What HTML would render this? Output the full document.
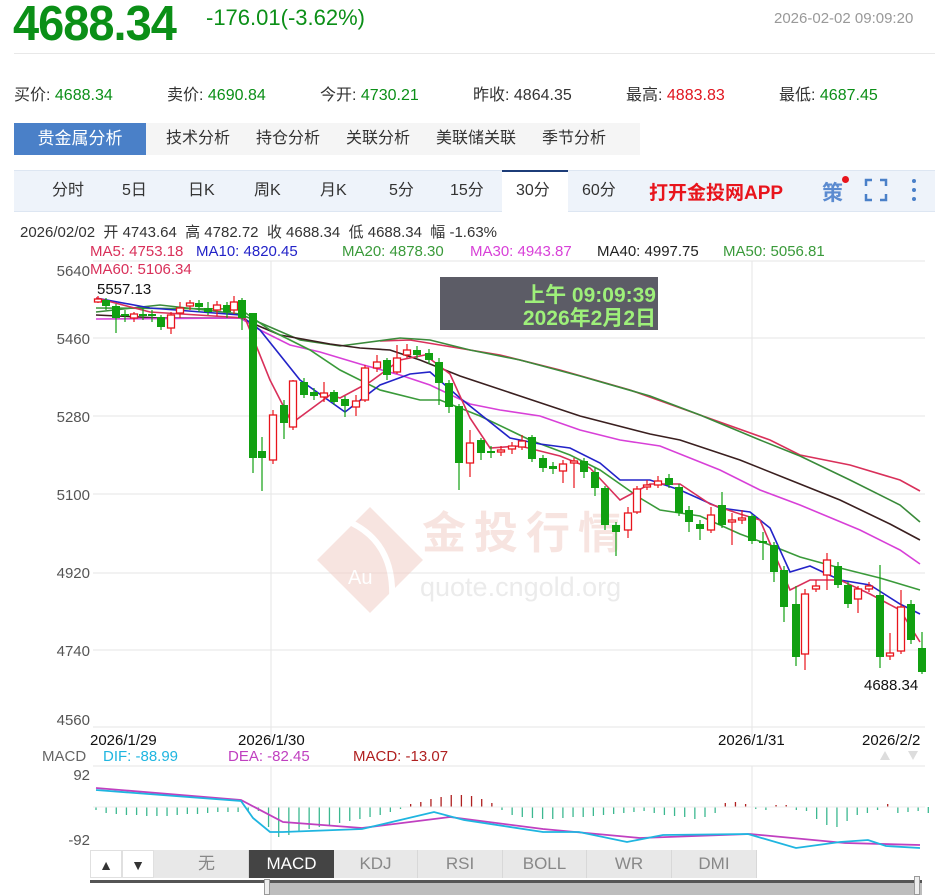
<!DOCTYPE html>
<html><head><meta charset="utf-8"><style>
*{margin:0;padding:0;box-sizing:border-box}
body{width:945px;height:895px;overflow:hidden;background:#fff;font-family:"Liberation Sans","Noto Sans CJK SC",sans-serif;position:relative;color:#333}
.a{position:absolute;white-space:nowrap}
.g{color:#0b8f17}.r{color:#e0141e}
</style></head><body>
<div class="a g" style="left:13px;top:-6px;font-size:47px;font-weight:bold;letter-spacing:-1px;transform:scaleY(1.05);transform-origin:top left">4688.34</div>
<div class="a g" style="left:206px;top:5px;font-size:22px">-176.01(-3.62%)</div>
<div class="a" style="left:774px;top:10px;font-size:15px;color:#999">2026-02-02 09:09:20</div>
<div class="a" style="left:14px;top:53px;width:921px;height:1px;background:#e8e8e8"></div>
<div class="a" style="left:14px;top:81px;font-size:16px">买价: <span class="g">4688.34</span></div>
<div class="a" style="left:167px;top:81px;font-size:16px">卖价: <span class="g">4690.84</span></div>
<div class="a" style="left:320px;top:81px;font-size:16px">今开: <span class="g">4730.21</span></div>
<div class="a" style="left:473px;top:81px;font-size:16px">昨收: <span>4864.35</span></div>
<div class="a" style="left:626px;top:81px;font-size:16px">最高: <span class="r">4883.83</span></div>
<div class="a" style="left:779px;top:81px;font-size:16px">最低: <span class="g">4687.45</span></div>

<div class="a" style="left:14px;top:123px;width:626px;height:32px;background:#f5f5f5"></div>
<div class="a" style="left:14px;top:123px;width:132px;height:32px;background:#4a80c8;color:#fff;font-size:17px;line-height:32px;text-align:center">贵金属分析</div>
<div class="a" style="left:166px;top:123px;font-size:16px;line-height:32px;word-spacing:0">技术分析</div>
<div class="a" style="left:256px;top:123px;font-size:16px;line-height:32px">持仓分析</div>
<div class="a" style="left:346px;top:123px;font-size:16px;line-height:32px">关联分析</div>
<div class="a" style="left:436px;top:123px;font-size:16px;line-height:32px">美联储关联</div>
<div class="a" style="left:542px;top:123px;font-size:16px;line-height:32px">季节分析</div>

<div class="a" style="left:14px;top:170px;width:921px;height:42px;background:#eef3fa;border-top:1px solid #dde6f2;border-bottom:1px solid #dde6f2"></div>
<div class="a" style="left:502px;top:170px;width:66px;height:42px;background:#fff;border-top:2px solid #1c3c78"></div>
<div class="a" style="top:180px;left:0;font-size:16px;line-height:22px">
<span class="a" style="left:52px">分时</span><span class="a" style="left:122px">5日</span><span class="a" style="left:188px">日K</span><span class="a" style="left:254px">周K</span><span class="a" style="left:320px">月K</span><span class="a" style="left:389px">5分</span><span class="a" style="left:450px">15分</span><span class="a" style="left:516px">30分</span><span class="a" style="left:582px">60分</span>
</div>
<div class="a r" style="left:649px;top:178px;font-size:19px;font-weight:bold;color:#e8141c">打开金投网APP</div>
<div class="a" style="left:822px;top:177px;font-size:21px;color:#5b8bd0;font-weight:bold">策</div>
<div class="a" style="left:842px;top:176px;width:7px;height:7px;border-radius:50%;background:#e8141c"></div>
<svg class="a" style="left:864px;top:178px" width="24" height="24"><path d="M2 8V2h6M16 2h6v6M22 16v6h-6M8 22H2v-6" stroke="#4a80c8" stroke-width="2.5" fill="none"/></svg>
<svg class="a" style="left:910px;top:178px" width="8" height="24"><circle cx="4" cy="3" r="2" fill="#4a80c8"/><circle cx="4" cy="12" r="2" fill="#4a80c8"/><circle cx="4" cy="21" r="2" fill="#4a80c8"/></svg>

<div class="a" style="left:20px;top:221px;font-size:15px">2026/02/02 &nbsp;开 4743.64 &nbsp;高 4782.72 &nbsp;收 4688.34 &nbsp;低 4688.34 &nbsp;幅 -1.63%</div>
<div class="a" style="left:90px;top:243px;font-size:15px"><span style="color:#d9305a">MA5: 4753.18</span></div>
<div class="a" style="left:196px;top:243px;font-size:15px;color:#2323c8">MA10: 4820.45</div>
<div class="a" style="left:342px;top:243px;font-size:15px;color:#3a9a3a">MA20: 4878.30</div>
<div class="a" style="left:470px;top:243px;font-size:15px;color:#d840d8">MA30: 4943.87</div>
<div class="a" style="left:597px;top:243px;font-size:15px;color:#222">MA40: 4997.75</div>
<div class="a" style="left:723px;top:243px;font-size:15px;color:#3a9a3a">MA50: 5056.81</div>

<svg class="a" style="left:0;top:0" width="945" height="895" id="s">
<g stroke="#e6e6e6" stroke-width="1">
<line x1="93" y1="261" x2="925" y2="261"/><line x1="93" y1="338" x2="925" y2="338"/><line x1="93" y1="416" x2="925" y2="416"/><line x1="93" y1="494" x2="925" y2="494"/><line x1="93" y1="573" x2="925" y2="573"/><line x1="93" y1="650" x2="925" y2="650"/><line x1="93" y1="727" x2="925" y2="727"/>
<line x1="271" y1="261" x2="271" y2="740"/><line x1="752" y1="261" x2="752" y2="740"/>
<line x1="93" y1="766" x2="925" y2="766"/><line x1="271" y1="766" x2="271" y2="850"/><line x1="752" y1="766" x2="752" y2="850"/>
</g>
<g font-size="15" fill="#555" text-anchor="end">
<text x="90" y="276">5640</text><text x="90" y="344">5460</text><text x="90" y="422">5280</text><text x="90" y="500">5100</text><text x="90" y="578">4920</text><text x="90" y="656">4740</text><text x="90" y="725">4560</text>
<text x="90" y="780">92</text><text x="90" y="845">-92</text>
</g>
<text x="90" y="274" font-size="15" fill="#d9305a">MA60: 5106.34</text>
<text x="97" y="294" font-size="15" fill="#111">5557.13</text>
<text x="864" y="690" font-size="15" fill="#111">4688.34</text>
<g opacity="0.55">
<path d="M370 507L423 560L370 613L317 560Z" fill="#f2cfc8"/>
<path d="M345 520Q395 540 392 600" stroke="#fff" stroke-width="6" fill="none"/>
<text x="348" y="584" font-size="20" fill="#fff">Au</text>
<text x="422" y="548" font-size="44" fill="#f2cfc8" font-weight="bold" letter-spacing="8">金投行情</text>
<text x="420" y="596" font-size="27" fill="#dcdcdc">quote.cngold.org</text>
</g>
<rect x="440" y="277" width="218" height="53" fill="#5c5c66"/>
<text x="656" y="302" font-size="21" fill="#9ef07a" text-anchor="end" font-weight="bold">上午 09:09:39</text>
<text x="656" y="325" font-size="21" fill="#9ef07a" text-anchor="end" font-weight="bold">2026年2月2日</text>
<g id="ma" fill="none" stroke-width="1.6"></g>
<g id="cd"></g>
<g font-size="15" fill="#111">
<text x="90" y="745">2026/1/29</text><text x="238" y="745">2026/1/30</text><text x="718" y="745">2026/1/31</text><text x="862" y="745">2026/2/2</text>
</g>
<text x="42" y="761" font-size="15" fill="#666">MACD</text>
<text x="103" y="761" font-size="15" fill="#1fb5e0">DIF: -88.99</text>
<text x="228" y="761" font-size="15" fill="#c040c0">DEA: -82.45</text>
<text x="353" y="761" font-size="15" fill="#b02020">MACD: -13.07</text>
<path d="M880 760l5-9 5 9z" fill="#ddd"/><path d="M908 751l5 9 5-9z" fill="#ddd"/>
<g id="mb"></g>
<polyline fill="none" stroke="#c040c0" stroke-width="1.8" points="96,788 241,800 283,822 362,828 450,817 543,829 640,838 750,834 845,843 920,845"/>
<polyline fill="none" stroke="#1fb5e0" stroke-width="1.8" points="96,790 241,801 253,818 270,832 283,832 362,829 434,812 464,820 543,832 579,832 627,842 663,835 748,834 796,848 840,842 868,840 886,846 920,848"/>
</svg>

<div class="a" style="left:90px;top:850px;width:667px;height:28px;background:#e8e8e8"></div>
<div class="a" style="left:90px;top:850px;width:32px;height:28px;background:#fff;border:1px solid #e0e0e0;text-align:center;line-height:28px;font-size:14px">▲</div>
<div class="a" style="left:122px;top:850px;width:32px;height:28px;background:#fff;border:1px solid #e0e0e0;text-align:center;line-height:28px;font-size:14px">▼</div>
<div class="a" style="top:850px;left:0;font-size:17px;line-height:28px;color:#888">
<span class="a" style="left:165px;width:84px;text-align:center;border-right:1px solid #d8d8d8">无</span>
<span class="a" style="left:249px;width:85px;text-align:center;background:#444;color:#fff">MACD</span>
<span class="a" style="left:334px;width:84px;text-align:center;border-right:1px solid #d8d8d8">KDJ</span>
<span class="a" style="left:418px;width:85px;text-align:center;border-right:1px solid #d8d8d8">RSI</span>
<span class="a" style="left:503px;width:84px;text-align:center;border-right:1px solid #d8d8d8">BOLL</span>
<span class="a" style="left:587px;width:85px;text-align:center;border-right:1px solid #d8d8d8">WR</span>
<span class="a" style="left:672px;width:85px;text-align:center;border-right:1px solid #d8d8d8">DMI</span>
</div>
<div class="a" style="left:90px;top:880px;width:832px;height:15px;background:#bdbdbd;border-top:3px solid #555"></div>
<div class="a" style="left:90px;top:883px;width:176px;height:12px;background:#fff"></div>
<div class="a" style="left:264px;top:879px;width:6px;height:16px;background:#eee;border:1px solid #999"></div>
<div class="a" style="left:914px;top:876px;width:6px;height:19px;background:#eee;border:1px solid #999"></div>

<script>
var NS="http://www.w3.org/2000/svg";
function el(p,t,a){var e=document.createElementNS(NS,t);for(var k in a)e.setAttribute(k,a[k]);p.appendChild(e);return e;}
var ma=document.getElementById('ma');
var L=[
["#d9305a","380,341 410,340 440,345 500,355 560,370 630,390 700,415 770,440 800,455 850,465 900,480 920,491"],
["#3a8a3a","96,312 160,305 240,314 300,340 340,346 400,338 430,340 470,350 520,360 580,376 650,396 700,415 760,440 800,456 850,480 900,505 920,522"],
["#3a1f1f","96,315 160,318 240,318 280,335 330,344 360,348 390,350 420,360 460,376 520,396 580,416 650,434 680,440 740,460 790,480 840,500 890,524 920,540"],
["#d840d8","96,319 240,318 260,330 290,345 320,352 360,364 400,375 430,385 470,404 500,410 540,416 580,430 620,440 660,446 720,470 760,490 800,505 860,530 900,550 920,564"],
["#3a9a3a","96,308 240,309 270,330 310,350 340,370 380,390 420,400 440,400 480,416 530,440 570,455 600,470 640,498 660,510 700,516 740,534 770,545 800,557 840,568 880,578 920,590"],
["#2323c8","96,298 150,308 240,315 260,330 300,380 345,412 380,385 410,374 430,372 460,398 510,438 540,444 570,448 600,463 620,480 650,480 680,490 720,508 750,512 770,528 790,572 810,566 840,580 870,585 900,604 920,614"],
["#d9305a","96,298 150,312 245,318 270,380 292,423 330,395 340,398 370,382 400,360 425,355 450,374 470,418 490,448 520,446 560,456 590,468 620,500 650,484 680,484 710,504 740,514 760,520 790,590 810,580 840,580 870,594 900,610 920,642"]];
L.forEach(function(l){el(ma,'polyline',{points:l[1],stroke:l[0]});});
var C=[[98,302,299,296,303],[106,300,306,298,310],[116,306,318,304,333],[125,314,316,310,322],[134,318,314,312,322],[143,314,316,308,320],[152,314,316,310,322],[161,317,327,315,330],[171,328,315,312,334],[180,313,308,302,318],[190,306,303,300,310],[199,303,307,300,312],[208,308,312,302,315],[217,310,305,301,316],[227,305,312,302,318],[234,310,302,296,314],[242,300,318,298,330],
[253,313,458,313,473],[262,451,458,437,491],[273,460,415,410,464],[284,405,423,400,439],[293,427,381,380,430],[304,382,395,378,398],[314,392,396,388,400],[324,397,393,382,402],[334,392,402,390,405],[345,399,406,396,417],[356,407,401,395,416],[365,400,368,365,402],[377,368,362,355,372],[387,360,375,358,380],[397,372,358,345,374],[407,355,350,344,358],[417,350,355,346,358],[429,353,360,349,364],[439,362,383,358,405],[449,383,407,380,413],[459,406,463,404,490],[470,463,443,430,477],[481,440,453,438,460],[491,451,452,446,458],[501,452,450,446,456],[512,449,446,442,454],[522,447,441,435,450],[532,437,459,435,462],[543,458,468,455,472],[553,466,469,462,474],[563,471,464,460,483],[574,463,461,458,488],[584,461,472,458,478],[595,472,488,468,496],
[605,488,525,486,530],[616,525,532,522,556],[628,530,513,507,538],[637,512,489,486,514],[647,487,485,480,490],[658,485,481,476,488],[669,478,485,474,488],[679,487,513,484,516],[689,510,522,506,532],[700,524,529,520,540],[711,530,515,507,533],[722,505,525,492,528],[732,522,520,513,545],[742,520,518,510,524],[752,516,541,514,544],[763,541,543,532,560],[774,545,572,542,582],[784,570,607,566,622],[796,604,657,586,666],[805,654,594,589,670],[816,589,586,580,592],[827,575,560,553,590],[838,566,585,562,588],[848,585,604,582,608],[858,599,589,586,613],[869,589,586,582,592],[880,595,657,565,668],[890,656,653,633,660],[901,651,607,590,654],[911,604,640,600,644],[922,648,672,632,674]];
var cd=document.getElementById('cd');
C.forEach(function(c){var up=c[2]<c[1];var col=up?"#e8141c":"#11a011";var t=Math.min(c[1],c[2]),b=Math.max(c[1],c[2]);
el(cd,'line',{x1:c[0],x2:c[0],y1:c[3],y2:c[4],stroke:col,'stroke-width':1.2});
if(up)el(cd,'rect',{x:c[0]-3.5,y:t,width:7,height:Math.max(b-t,1.5),fill:'#fff',stroke:col,'stroke-width':1.3});
else el(cd,'rect',{x:c[0]-4,y:t,width:8,height:Math.max(b-t,2),fill:col});});
var mb=document.getElementById('mb');
var V=[-3,-6,-7,-8,-8,-9,-9,-9,-8,-7,-7,-6,-5,-5,-5,-4,-4,-20,-30,-28,-25,-22,-20,-18,-16,-14,-12,-10,-8,-5,-2,3,5,8,10,12,12,11,8,4,-3,-8,-10,-11,-12,-12,-11,-10,-10,-9,-8,-7,-6,-5,-4,-6,-8,-9,-10,-12,-10,-6,4,5,3,-2,-3,2,2,-3,-4,-12,-18,-20,-14,-8,-6,-3,3,-6,-5,-4,-6];
V.forEach(function(v,i){var x=96+i*10.15;el(mb,'line',{x1:x,x2:x,y1:807,y2:807-v,stroke:v>0?"#b02020":"#3cb890",'stroke-width':1.3});});
el(mb,'line',{x1:93,x2:925,y1:807,y2:807,stroke:'#eee'});
</script>
</body></html>
